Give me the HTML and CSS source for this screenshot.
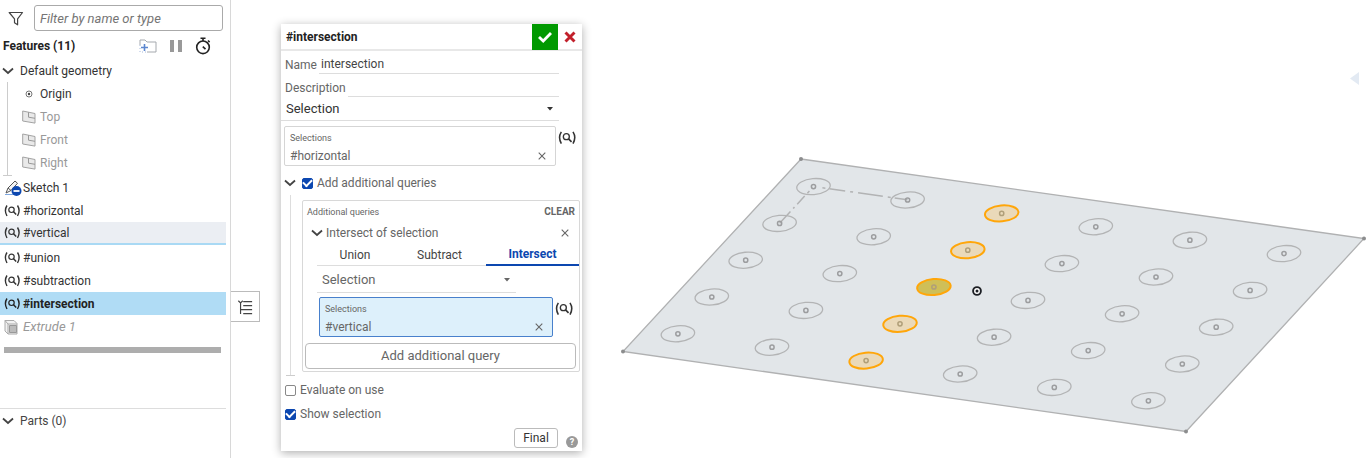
FILE: index.html
```html
<!DOCTYPE html>
<html lang="en">
<head>
<meta charset="utf-8">
<title>#intersection</title>
<link rel="stylesheet" href="styles.css">
</head>
<body>
<svg class="defs" aria-hidden="true">
  <symbol id="query" viewBox="0 0 18 16"><g fill="none" stroke="currentColor"><path d="M3 2.500Q-.2 7.500 3 13M13.500 2.500q3.200 5 0 10.500" stroke-width="1.400"/><circle cx="7.500" cy="6.800" r="2.700" stroke-width="1.200"/><path d="m9.500 8.800 2.700 2.700" stroke-width="1.500"/></g></symbol>
  <symbol id="chevron" viewBox="0 0 12 8"><path d="m1 1.500 5 4.500 5-4.500" fill="none" stroke="currentColor" stroke-width="1.800"/></symbol>
  <symbol id="plane" viewBox="0 0 14 14"><path d="M.7 1 13 3.500v9.600L.7 11z" fill="#e9e9e9" stroke="#a3a3a3"/><path d="M6.500 2.200v5L13 8.300" fill="none" stroke="#999"/></symbol>
  <symbol id="cross" viewBox="0 0 8 8"><path d="m.7.700 6.600 6.600m0-6.600L.7 7.300" fill="none" stroke="currentColor" stroke-width="1.100"/></symbol>
  <symbol id="caret" viewBox="0 0 6 4"><path d="M0 0h6L3 3.500z" fill="currentColor"/></symbol>
</svg>
<div class="app">
  <aside class="sidebar">
    <div class="filter">
      <svg class="funnel" viewBox="0 0 16 16"><path d="M1.200 1.500h13.300L9.600 7.800v6L6.500 11.700V7.800z" fill="none" stroke="#444" stroke-width="1.200" stroke-linejoin="round"/></svg>
      <input class="filter-input" type="text" placeholder="Filter by name or type" aria-label="Filter by name or type">
    </div>
    <div class="features-head">
      <h2 class="title">Features (11)</h2>
      <button class="icon-button" aria-label="Add folder"><svg class="icon18" viewBox="0 0 18 16"><path d="M1 7V2h5l2 2h9v10H8" fill="none" stroke="#a5a9ae"/><path d="M1 7v7h7" fill="none" stroke="#a5b9dc" stroke-dasharray="1 2"/><path d="M5.500 6v7M2 9.500h7" stroke="#5c87cf" stroke-width="1.600"/></svg></button>
      <button class="icon-button" aria-label="Suspend"><svg class="icon12" viewBox="0 0 12 14"><path d="M0 1h4v12H0zM8 1h4v12H8z" fill="#999"/></svg></button>
      <button class="icon-button" aria-label="Timings"><svg class="icon16" viewBox="0 0 16 18"><g fill="none" stroke="#222" stroke-width="1.600"><circle cx="8" cy="10.300" r="6.300"/><path d="M5.500 1.200h5M8 1v3M13 3.500l1.600 1.600M7.800 9.700l2.700 2.500"/></g></svg></button>
    </div>
    <ul class="tree">
      <li class="row group"><svg class="chev"><use href="#chevron"/></svg>Default geometry</li>
      <li>
        <ul class="children">
          <li class="row child"><svg class="origin" viewBox="0 0 8 8"><circle cx="4" cy="4" r="3" fill="none" stroke="#555" stroke-width=".8"/><circle cx="4" cy="4" r="1.200" fill="#444"/></svg>Origin</li>
          <li class="row child muted"><svg class="icon14"><use href="#plane"/></svg>Top</li>
          <li class="row child muted"><svg class="icon14"><use href="#plane"/></svg>Front</li>
          <li class="row child muted"><svg class="icon14"><use href="#plane"/></svg>Right</li>
        </ul>
      </li>
      <li class="row item"><svg class="icon18" viewBox="0 0 18 16"><path d="M2 13 4 8l7-7 2.500 2.300L7 10.500zm2-5 3 2.500" fill="#f4f4f4" stroke="#555"/><path d="M1 14.500h8" stroke="#7da7e0"/><circle cx="12.500" cy="11" r="5" fill="#0c47b0"/><path d="M9.500 11h6" stroke="#fff" stroke-width="1.800"/></svg>Sketch 1</li>
      <li class="row item"><svg class="icon18"><use href="#query"/></svg>#horizontal</li>
      <li class="row item hover"><svg class="icon18"><use href="#query"/></svg>#vertical</li>
      <li class="row item"><svg class="icon18"><use href="#query"/></svg>#union</li>
      <li class="row item"><svg class="icon18"><use href="#query"/></svg>#subtraction</li>
      <li class="row item selected"><svg class="icon18"><use href="#query"/></svg>#intersection</li>
      <li class="row item extrude"><svg class="icon18" viewBox="0 0 18 16"><path d="M1 1.500h9l3 3V15H4l-3-3z" fill="#f1f1f1" stroke="#aaa"/><path d="M1 1.500 4 5h9M4 5v10" fill="none" stroke="#aaa"/><path d="M5.500 6.500h7v7h-7z" fill="#bbb" stroke="#999"/></svg>Extrude 1</li>
    </ul>
    <div class="rollback"></div>
    <div class="parts"><svg class="chev"><use href="#chevron"/></svg>Parts (0)</div>
  </aside>

  <main class="viewport">
    <svg class="scene" viewBox="231 0 1137 458" preserveAspectRatio="xMaxYMin meet" role="img" aria-label="Sketch plane">
      <path d="M801 159 1364 238.500 1186 431.500 623 351.500z" fill="#e2e6e9" stroke="#b0b1b2" stroke-width="1.300"/>
      <g fill="#8c8d8e"><circle cx="801" cy="159" r="2"/><circle cx="1364" cy="238.500" r="2"/><circle cx="1186" cy="431.500" r="2"/><circle cx="623" cy="351.500" r="2"/></g>
      <path d="M779.600 223.300 813.500 186.500" stroke="#b2b3b4" stroke-width="1.500" stroke-dasharray="16 4 2 4 11 4 3 20"/>
      <path d="m813.500 186.500 94 13.300" stroke="#b2b3b4" stroke-width="1.500" stroke-dasharray="0 9 3 4 16 5 3 5 25 5 3 4 14"/>
      <g id="holes"></g>
      <circle cx="977" cy="291" r="3.900" fill="#fff" stroke="#1c1f24" stroke-width="1.900"/><circle cx="977" cy="291" r="1.500" fill="#1c1f24"/>
      <path d="M1350 78.500 1359 72v13z" fill="#e3eaf3"/>
    </svg>
    <button class="panel-toggle" aria-label="Toggle feature list"><svg class="icon18" viewBox="0 0 18 18"><path d="m1.500 2 2.500 2.500L6.500 2M4 4.500V17M7 3h10M7 7.500h10M4 12h13M7 16.500h10" fill="none" stroke="#444" stroke-width="1.300"/></svg></button>

    <form class="dialog">
      <header class="dialog-head">
        <h1 class="title">#intersection</h1>
        <button class="accept" type="button" aria-label="Accept"><svg class="icon16" viewBox="0 0 16 16"><path d="m2 8 4.200 4L14 4" fill="none" stroke="#fff" stroke-width="2.800"/></svg></button>
        <button class="cancel" type="button" aria-label="Cancel"><svg class="icon12" viewBox="0 0 12 12"><path d="m1.500 1.500 9 9m0-9-9 9" stroke="#c2202b" stroke-width="2.900"/></svg></button>
      </header>
      <div class="field"><label for="name">Name</label><input id="name" class="line-input" type="text" value="intersection"></div>
      <div class="field"><label for="desc">Description</label><input id="desc" class="line-input" type="text"></div>
      <div class="select-wrap dark"><select class="select" aria-label="Feature type"><option>Selection</option></select><svg class="caret"><use href="#caret"/></svg></div>
      <div class="picker">
        <div class="selection-box">
          <span class="small">Selections</span>
          <div class="value">#horizontal<button class="icon-button" type="button" aria-label="Remove #horizontal"><svg class="icon8"><use href="#cross"/></svg></button></div>
        </div>
        <button class="icon-button query-button" type="button" aria-label="Query"><svg class="icon20"><use href="#query"/></svg></button>
      </div>
      <div class="toggle-row"><svg class="chev"><use href="#chevron"/></svg><label class="check"><input type="checkbox" class="box" checked>Add additional queries</label></div>
      <div class="nest">
        <div class="queries">
          <div class="queries-head"><span class="small">Additional queries</span><button class="clear" type="button">CLEAR</button></div>
          <div class="query-title"><svg class="chev"><use href="#chevron"/></svg><span>Intersect of selection</span><button class="icon-button" type="button" aria-label="Remove query"><svg class="icon8"><use href="#cross"/></svg></button></div>
          <div class="tabs" role="tablist"><button class="tab" type="button" role="tab">Union</button><button class="tab" type="button" role="tab">Subtract</button><button class="tab active" type="button" role="tab" aria-selected="true">Intersect</button></div>
          <div class="select-wrap inner"><select class="select" aria-label="Query type"><option>Selection</option></select><svg class="caret"><use href="#caret"/></svg></div>
          <div class="picker inner-picker">
            <div class="selection-box focused">
              <span class="small">Selections</span>
              <div class="value">#vertical<button class="icon-button" type="button" aria-label="Remove #vertical"><svg class="icon8"><use href="#cross"/></svg></button></div>
            </div>
            <button class="icon-button query-button" type="button" aria-label="Query"><svg class="icon20"><use href="#query"/></svg></button>
          </div>
          <button class="add" type="button">Add additional query</button>
        </div>
      </div>
      <label class="check option"><input type="checkbox" class="box">Evaluate on use</label>
      <label class="check option"><input type="checkbox" class="box" checked>Show selection</label>
      <footer class="dialog-foot"><button class="final" type="button">Final</button><button class="help" type="button" aria-label="Help">?</button></footer>
    </form>
  </main>
</div>
<script src="scene.js"></script>
</body>
</html>
```
FILE: styles.css
```css
* { box-sizing: border-box; }
body { margin: 0; background: #fff; color: #333; font: 12px/16px Roboto, "Liberation Sans", sans-serif; }
button, input, select { font: inherit; color: inherit; }
button { padding: 0; border: 0; background: none; }
ul { margin: 0; padding: 0; list-style: none; }
svg { flex: none; display: block; }
.defs { position: absolute; width: 0; height: 0; }
.title { flex: 1; margin: 0; font-size: 12px; font-weight: 700; color: #222; }
.icon-button { display: flex; align-items: center; }
.icon8 { width: 8px; height: 8px; }
.icon12 { width: 12px; height: 14px; }
.icon14 { width: 14px; height: 14px; }
.icon16 { width: 16px; height: 18px; }
.icon18 { width: 18px; height: 16px; }
.icon20 { width: 20px; height: 18px; }
.chev { width: 12px; height: 8px; color: #444; }

.app { display: flex; min-height: 100vh; }
.sidebar { flex: none; width: 231px; padding-right: 4px; border-right: 1px solid #d8d8d8; }
.filter { display: flex; align-items: center; gap: 10px; padding: 5px 3px 0 8px; }
.funnel { width: 16px; height: 16px; margin-top: 2px; }
.filter-input { flex: 1; min-width: 0; height: 26px; padding: 0 5px; border: 1px solid #aaa; border-radius: 3px; background: #fff; font-size: 13px; }
.filter-input::placeholder { color: #757575; font-style: italic; opacity: 1; }
.features-head { display: flex; align-items: center; gap: 13px; height: 28px; padding: 1px 15px 0 3px; }
.tree { display: flex; flex-direction: column; }
.row { display: flex; align-items: center; height: 23px; }
.group { gap: 6px; padding-left: 2px; }
.children { position: relative; margin-left: 7px; padding-bottom: 2px; border-left: 1px solid #ccc; }
.children::after { content: ""; position: absolute; left: -5px; bottom: 0; width: 9px; border-bottom: 1px solid #ccc; }
.child { gap: 4px; padding-left: 14px; }
.origin { width: 8px; height: 8px; margin: 0 3px; }
.muted { color: #999; }
.item { gap: 1px; padding-left: 4px; }
.hover { margin-bottom: 1px; padding-top: 1px; background: #ebeef3; border-bottom: 2px solid #a9d9f4; }
.selected { background: #b0dcf5; font-weight: 700; color: #222; }
.extrude { color: #999; font-size: 13px; font-style: italic; }
.rollback { height: 6px; margin: 9px 5px 0 4px; background: #adadad; }
.parts { display: flex; align-items: center; gap: 6px; height: 24px; margin-top: 55px; padding-left: 2px; border-top: 1px solid #ddd; color: #444; }

.viewport { position: relative; flex: 1; min-width: 0; overflow: hidden; }
.scene { position: absolute; inset: 0; width: 100%; }
.panel-toggle { position: absolute; left: -1px; top: 291px; display: grid; place-items: center; width: 30px; height: 31px; border: 1px solid #bbb; background: #fff; }

.dialog { position: relative; width: 301px; margin: 24px 0 7px 50px; background: #fff; box-shadow: 0 2px 9px rgba(0, 0, 0, .32); color: #666; }
.dialog-head { display: flex; align-items: center; height: 27px; padding-left: 5px; border-bottom: 2px solid #e8e8e8; }
.accept { display: grid; place-items: center; width: 26px; height: 26px; background: #090; }
.cancel { display: grid; place-items: center; width: 24px; height: 26px; }
.field { display: flex; align-items: flex-end; gap: 2px; height: 23px; padding: 0 23px 0 4px; }
.field label { padding-bottom: 1px; }
.line-input { flex: 1; min-width: 0; height: 19px; padding: 0 2px; border: 0; border-bottom: 1px solid #ddd; background: none; color: #444; }
.select-wrap { position: relative; display: flex; align-items: center; margin-right: 23px; height: 24px; border-bottom: 1px solid #ddd; font-size: 13px; }
.select { appearance: none; width: 100%; padding: 0 5px; border: 0; background: none; }
.dark { color: #333; }
.caret { position: absolute; right: 6px; width: 6px; height: 4px; color: #333; }
.picker { display: flex; align-items: flex-start; gap: 2px; padding: 5px 4px 0 3px; }
.selection-box { flex: 1; height: 40px; padding: 4px 9px 0 5px; border: 1px solid #d5d5d5; border-radius: 2px; }
.small { display: block; font-size: 9px; line-height: 14px; }
.value { display: flex; align-items: center; justify-content: space-between; height: 21px; }
.focused { border-color: #4880cc; background: #ddf0fb; }
.query-button { padding-top: 3px; color: #333; }
.toggle-row { display: flex; align-items: center; gap: 6px; height: 34px; padding-left: 3px; }
.check { display: flex; align-items: center; gap: 4px; }
.box { appearance: none; display: grid; place-items: center; width: 11px; height: 11px; margin: 0; border: 1px solid #888; border-radius: 2px; background: #fff; }
.box:checked { border-color: #0c47b0; background: #0c47b0; }
.box:checked::after { content: ""; width: 7px; height: 4px; margin-bottom: 2px; border: solid #fff; border-width: 0 0 2px 2px; transform: rotate(-45deg); }
.nest { position: relative; margin: 0 2px 0 9px; padding-left: 12px; }
.nest::before { content: ""; position: absolute; left: -4px; top: -5px; bottom: -4px; width: 9px; border-bottom: 1px solid #ccc; background: linear-gradient(#ddd, #ddd) center / 1px 100% no-repeat; }
.queries { border: 1px solid #d8d8d8; padding-bottom: 2px; border-radius: 2px; }
.queries-head { display: flex; align-items: center; justify-content: space-between; height: 21px; padding: 0 4px; }
.clear { font-size: 10px; font-weight: 700; }
.query-title { display: flex; align-items: center; gap: 3px; height: 21px; padding: 0 10px 0 8px; }
.query-title span { flex: 1; }
.tabs { display: grid; grid-template-columns: 76px 1fr 93px; height: 23px; margin-left: 14px; border-bottom: 1px solid #ddd; color: #444; }
.tab { height: 23px; }
.active { border-bottom: 2px solid #0c47b0; color: #0c47b0; font-weight: 700; }
.inner { height: 27px; margin: 0 63px 0 14px; padding-top: 2px; }
.inner .caret { color: #666; }
.inner-picker { padding: 4px 4px 0 16px; }
.add { display: block; width: calc(100% - 5px); height: 26px; margin: 6px 3px 0 2px; border: 1px solid #bbb; border-radius: 4px; background: #fff; font-size: 13px; }
.option { height: 24px; padding-left: 4px; }
.nest + .option { margin-top: 6px; }
.dialog-foot { display: flex; align-items: flex-end; justify-content: flex-end; gap: 8px; padding: 2px 4px 3px; }
.final { width: 44px; height: 20px; border: 1px solid #bbb; border-radius: 3px; line-height: 16px; color: #333; }
.help { width: 12px; height: 12px; border-radius: 50%; background: #999; color: #fff; font-size: 9px; font-weight: 700; line-height: 12px; }
```
FILE: scene.js
```js
const holes = document.getElementById("holes");
const svgNs = "http://www.w3.org/2000/svg";

function add(name, attrs) {
  const node = document.createElementNS(svgNs, name);
  for (const key in attrs) node.setAttribute(key, attrs[key]);
  holes.appendChild(node);
}

for (let row = 0; row < 5; row++) {
  for (let col = 0; col < 6; col++) {
    const x = 813.5 + col * 94.1 - row * 33.9;
    const y = 186.6 + col * 13.4 + row * 36.8;
    const picked = col === 2;
    add("ellipse", {
      cx: x, cy: y, rx: 16.8, ry: 8,
      transform: `rotate(-5 ${x} ${y})`,
      fill: picked ? (row === 2 ? "#cfbf58" : "#ead9b9") : "none",
      stroke: picked ? "#ffa60a" : "#b3b4b5",
      "stroke-width": picked ? 2 : 1.3
    });
    add("circle", { cx: x, cy: y, r: 2.1, fill: "none", stroke: picked ? "#b09f79" : "#9c9d9f", "stroke-width": 1.5 });
  }
}
```
